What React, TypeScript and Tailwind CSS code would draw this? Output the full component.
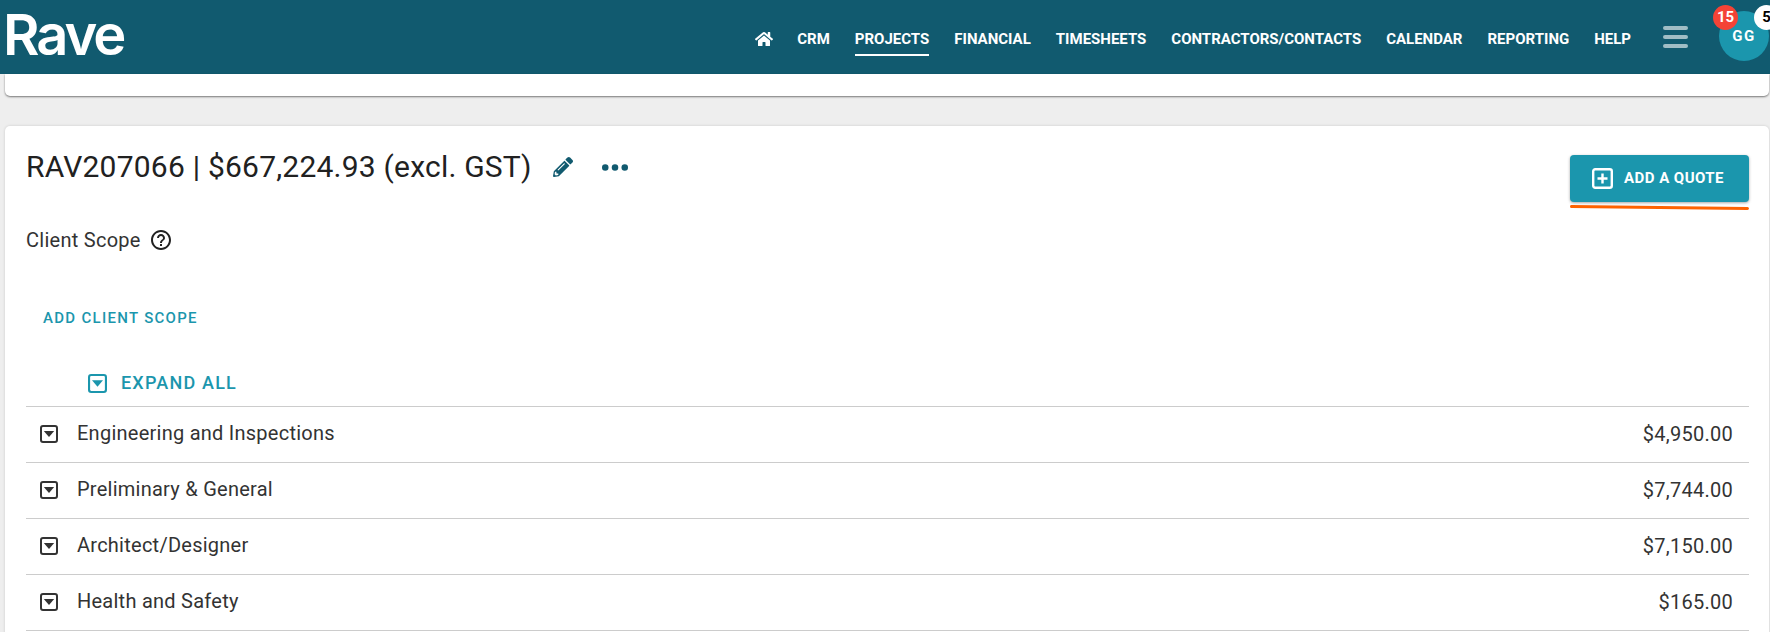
import { FaHome, FaPencilAlt } from "react-icons/fa";
import { MdOutlineHelpOutline } from "react-icons/md";

const navItems = ["CRM", "PROJECTS", "FINANCIAL", "TIMESHEETS", "CONTRACTORS/CONTACTS", "CALENDAR", "REPORTING", "HELP"];

const scopeRows = [
  { name: "Engineering and Inspections", amount: "$4,950.00" },
  { name: "Preliminary & General", amount: "$7,744.00" },
  { name: "Architect/Designer", amount: "$7,150.00" },
  { name: "Health and Safety", amount: "$165.00" },
];

function ExpandIcon({ className }: { className: string }) {
  return (
    <svg viewBox="0 0 18 18" className={className} fill="none">
      <rect x="1" y="1" width="16" height="16" rx="2" stroke="currentColor" strokeWidth="2" />
      <path d="M3.8 6h10.4L9 12z" fill="currentColor" />
    </svg>
  );
}

export default function App() {
  return (
    <div className="h-[632px] w-[1770px] overflow-hidden bg-[#eeeeee] font-['Roboto',sans-serif]">
      {/* header */}
      <header className="flex h-[74px] items-center bg-[#115a6f] text-white">
        <div className="ml-[3px] mt-[-4px] font-['Inter',sans-serif] text-[56px] font-semibold leading-none tracking-[-3px]">Rave</div>
        <nav className="ml-auto mt-[5px] flex items-center gap-[25px] text-[15px] font-bold">
          <FaHome className="mb-[2px] mr-[-1px] text-[18px]" />
          {navItems.map((item) => (
            <a key={item} className={item === "PROJECTS" ? "border-b-2 border-white pb-[3px] pt-[5px]" : "border-b-2 border-transparent pb-[3px] pt-[5px]"}>
              {item}
            </a>
          ))}
        </nav>
        <div className="ml-[32px] flex flex-col gap-[5px]">
          <span className="h-[4px] w-[25px] rounded-full bg-[#a0bdc5]" />
          <span className="h-[4px] w-[25px] rounded-full bg-[#a0bdc5]" />
          <span className="h-[4px] w-[25px] rounded-full bg-[#a0bdc5]" />
        </div>
        <div className="relative ml-[31px] mr-[1px] mt-[-2px] flex h-[50px] w-[50px] shrink-0 items-center justify-center rounded-full bg-[#1b96ad] text-[15px] font-bold tracking-[1.5px]">
          GG
          <span className="absolute left-[-6px] top-[-6px] flex h-[25px] w-[25px] items-center justify-center rounded-full bg-[#f44336] text-[15px] font-bold tracking-normal">15</span>
          <span className="absolute left-[35px] top-[-6px] flex h-[25px] w-[25px] items-center justify-center rounded-full bg-white text-[15px] font-bold tracking-normal text-black">5</span>
        </div>
      </header>

      {/* top card, scrolled away */}
      <div className="ml-[5px] mr-[1px] h-[22px] rounded-b-[5px] bg-white shadow-[0_1px_2px_rgba(0,0,0,0.5)]" />

      {/* quote card */}
      <section className="ml-[5px] mr-[1px] mt-[30px] h-[600px] rounded-[5px] bg-white pl-[21px] pr-[20px] shadow-[0_0_3px_rgba(0,0,0,0.15)]">
        <div className="flex items-start justify-between">
          <div className="mt-[21px] flex items-center">
            <h1 className="text-[30px] font-normal leading-[40px] tracking-[0.22px] text-[#212121]">RAV207066 | $667,224.93 (excl. GST)</h1>
            <FaPencilAlt className="ml-[21px] text-[20px] text-[#115a6f]" />
            <svg viewBox="0 0 26 7" className="ml-[29px] h-[7px] w-[26px] text-[#115a6f]" fill="currentColor">
              <circle cx="3.25" cy="3.5" r="3.25" />
              <circle cx="13" cy="3.5" r="3.25" />
              <circle cx="22.75" cy="3.5" r="3.25" />
            </svg>
          </div>
          <div className="relative mt-[29px]">
            <button className="flex h-[47px] w-[179px] items-center justify-center gap-[11px] rounded-[4px] bg-[#1b96ad] pr-[3px] text-[15px] font-bold tracking-[0.45px] text-white shadow-[0_1px_3px_rgba(0,0,0,0.35)]">
              <svg viewBox="0 0 21 21" className="h-[21px] w-[21px]" fill="none" stroke="currentColor" strokeWidth="2.4">
                <rect x="1.2" y="1.2" width="18.6" height="18.6" rx="2" />
                <path d="M10.5 5.5v10M5.5 10.5h10" />
              </svg>
              ADD A QUOTE
            </button>
            <div className="absolute left-0 top-[51px] h-[3px] w-[179px] rotate-[0.6deg] rounded-full bg-[#ff6200]" />
          </div>
        </div>

        <div className="mt-[26px] flex items-center gap-[8px] text-[20px] leading-[24px] tracking-[0.27px] text-[#333333]">
          Client Scope
          <MdOutlineHelpOutline className="text-[24px] text-[#212121]" />
        </div>

        <div className="ml-[17px] mt-[56px] text-[15px] font-medium leading-[20px] tracking-[1.3px] text-[#1b96ad]">ADD CLIENT SCOPE</div>

        <div className="ml-[62px] mt-[39px] flex h-[32px] items-center gap-[14px] text-[18px] font-medium tracking-[1.2px] text-[#1b96ad]">
          <ExpandIcon className="h-[19px] w-[19px]" />
          <span className="mt-[-1px]">EXPAND ALL</span>
        </div>

        <div className="mt-[7px] border-t border-[#cccccc]">
          {scopeRows.map((row) => (
            <div key={row.name} className="flex h-[56px] items-center justify-between border-b border-[#cccccc] pl-[14px] pr-[16px] text-[20px] tracking-[0.25px] text-[#333333]">
              <div className="flex items-center gap-[19px]">
                <ExpandIcon className="mt-[-2px] h-[18px] w-[18px]" />
                <span className="mt-[-3px]">{row.name}</span>
              </div>
              <span className="mt-[-2px]">{row.amount}</span>
            </div>
          ))}
        </div>
      </section>
    </div>
  );
}
